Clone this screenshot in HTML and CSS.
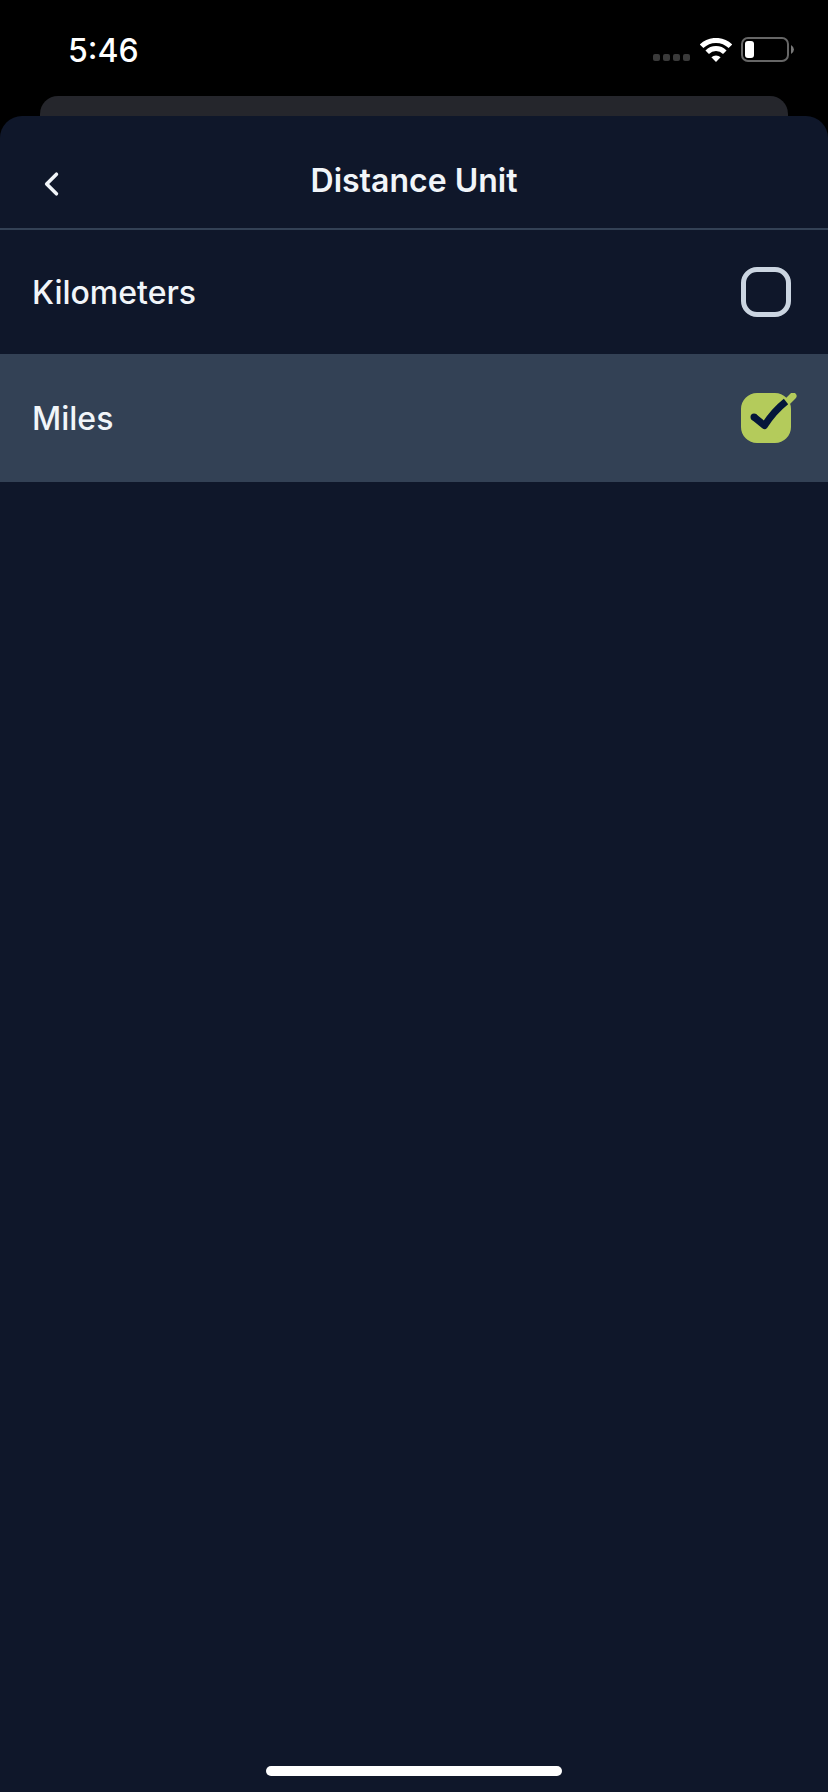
FILE: index.html
```html
<!DOCTYPE html>
<html lang="en">
<head>
    <meta charset="UTF-8">
    <meta name="viewport" content="width=device-width, initial-scale=1.0">
    <title>Distance Unit</title>
    <link rel="stylesheet" href="styles.css">
</head>
<body>

    <!-- Status bar -->
    <div class="status-bar">
        <span class="time">5:46</span>
        <div class="status-icons">
            <svg class="signal" width="38" height="8" viewBox="0 0 38 8" fill="#3a3a3a">
                <rect x="0" y="0" width="7" height="7" rx="2"/>
                <rect x="10" y="0" width="7" height="7" rx="2"/>
                <rect x="20" y="0" width="7" height="7" rx="2"/>
                <rect x="30" y="0" width="7" height="7" rx="2"/>
            </svg>
            <svg width="32" height="24" viewBox="0 0 32 24" fill="none" stroke="#fff" stroke-width="5">
                <path d="M1.6 8.3a20.5 20.5 0 0 1 28.8 0"/>
                <path d="M7.2 14.2a12.5 12.5 0 0 1 17.6 0"/>
                <path d="M16 24l-4.6-4.7a6.5 6.5 0 0 1 9.2 0z" fill="#fff" stroke="none"/>
            </svg>
            <svg width="54" height="26" viewBox="0 0 54 26">
                <rect x="1" y="1" width="46" height="23" rx="6" fill="none" stroke="#666" stroke-width="2"/>
                <rect x="4" y="4" width="9" height="17" rx="3" fill="#fff"/>
                <path d="M50 8q3 2 3 4.500t-3 4.500z" fill="#777"/>
            </svg>
        </div>
    </div>

    <!-- Edge of the page behind the sheet -->
    <div class="back-sheet"></div>

    <main class="sheet">
        <header class="header">
            <button type="button" class="back-btn" aria-label="Back">
                <svg width="18" height="28" viewBox="0 0 18 28" fill="none" stroke="#f1f5f9" stroke-width="4" stroke-linecap="round" stroke-linejoin="round">
                    <path d="M14 3L3 14l11 11"/>
                </svg>
            </button>
            <h1>Distance Unit</h1>
        </header>

        <form class="options">
            <label class="option" for="kilometers">
                <span>Kilometers</span>
                <span class="tick">
                    <input type="checkbox" id="kilometers">
                </span>
            </label>
            <label class="option selected" for="miles">
                <span>Miles</span>
                <span class="tick">
                    <input type="checkbox" id="miles" checked>
                    <svg class="tick-mark" width="58" height="50" viewBox="0 0 58 50" fill="none" stroke-width="7">
                        <path d="M46 9L52 3" stroke="#b4cb5b" stroke-linecap="round"/>
                        <path d="M13 24l10.500 8.500Q33 18 45 8.500" stroke="#04163a" stroke-linejoin="round"/>
                        <circle cx="13" cy="24" r="3.500" fill="#04163a" stroke="none"/>
                    </svg>
                </span>
            </label>
        </form>

        <div class="home-indicator"></div>
    </main>

</body>
</html>
```
FILE: styles.css
```css
* {
    box-sizing: border-box;
}

body {
    display: flex;
    flex-direction: column;
    min-height: 100vh;
    margin: 0;
    background: #000;
    color: #f1f5f9;
    font-family: Inter, "Liberation Sans", sans-serif;
}

svg {
    display: block;
}

/* Status bar */
.status-bar {
    display: flex;
    justify-content: space-between;
    align-items: center;
    height: 96px;
    padding: 4px 33px 0 68px;
    color: #fff;
}

.time {
    font-size: 32px;
    font-weight: 500;
}

.status-icons {
    display: flex;
    align-items: center;
    gap: 9px;
}

.signal {
    margin-top: 16px;
}

.back-sheet {
    height: 20px;
    margin: 0 40px;
    border-radius: 18px 18px 0 0;
    background: #25262c;
}

/* Sheet */
.sheet {
    flex: 1;
    display: flex;
    flex-direction: column;
    border-radius: 22px 22px 0 0;
    background: #0f172a;
}

.header {
    display: grid;
    grid-template-columns: 64px 1fr 64px;
    align-items: center;
    height: 114px;
    padding: 16px 20px 0;
    border-bottom: 2px solid #334155;
}

.header h1 {
    margin: 0;
    font-size: 32px;
    font-weight: 600;
    text-align: center;
}

.back-btn {
    display: flex;
    align-items: center;
    height: 64px;
    padding: 8px 24px 0;
    border: none;
    background: none;
    cursor: pointer;
}

/* Options */
.option {
    display: flex;
    justify-content: space-between;
    align-items: center;
    height: 124px;
    padding: 0 37px 0 32px;
    font-size: 32px;
    font-weight: 500;
    cursor: pointer;
}

.option.selected {
    height: 128px;
    background: #334155;
}

.tick {
    position: relative;
}

.tick input {
    appearance: none;
    display: block;
    width: 50px;
    height: 50px;
    margin: 0;
    border: 5px solid #cbd5e1;
    border-radius: 16px;
    cursor: pointer;
}

.tick input:checked {
    border-color: #b4cb5b;
    background: #b4cb5b;
}

/* The stroke runs past the corner of the box */
.tick-mark {
    position: absolute;
    top: 0;
    left: 0;
    pointer-events: none;
}

.home-indicator {
    width: 296px;
    height: 10px;
    margin: auto auto 16px;
    border-radius: 5px;
    background: #fff;
}
```
